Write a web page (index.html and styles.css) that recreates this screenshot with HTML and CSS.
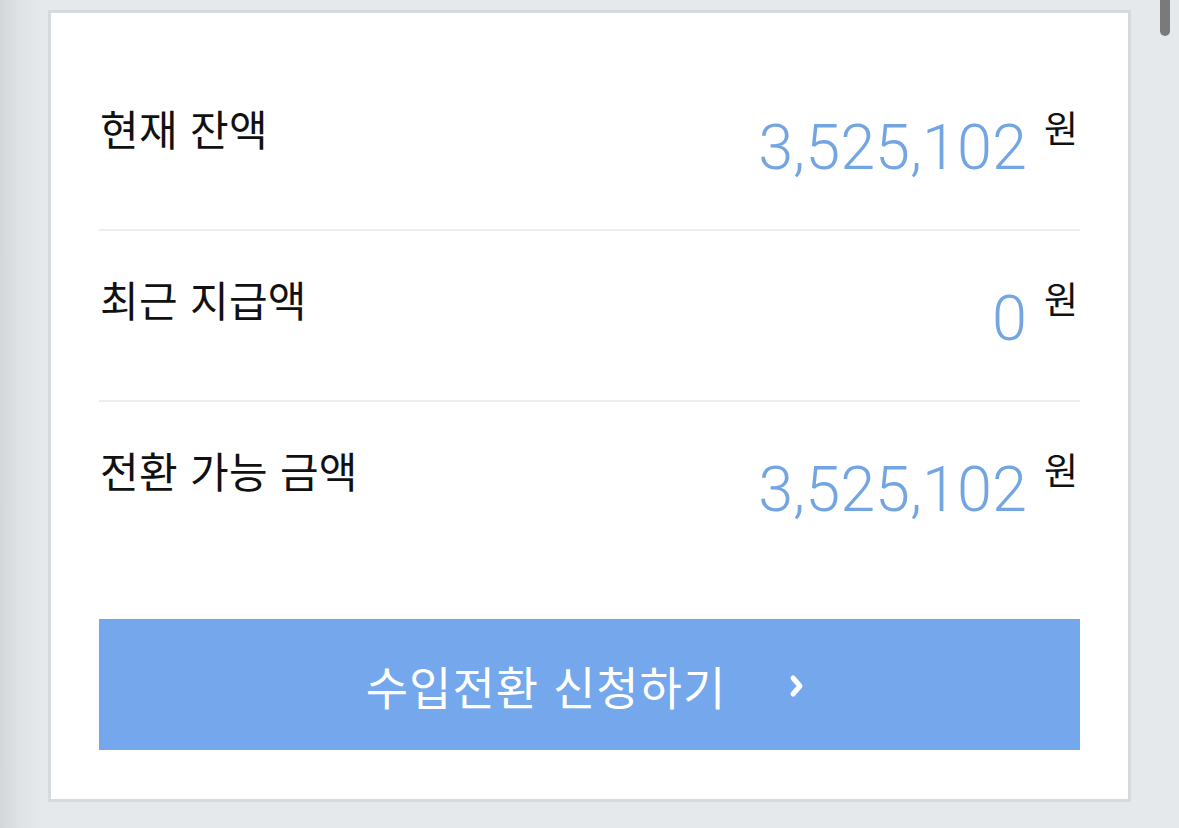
FILE: index.html
```html
<!DOCTYPE html>
<html lang="ko">
<head>
<meta charset="utf-8">
<title>잔액</title>
<link rel="stylesheet" href="styles.css">
</head>
<body>
<div class="page">
  <section class="card">
    <div class="row">
      <span class="label">현재 잔액</span>
      <span class="value"><span class="num">3,525,102</span><span class="unit">원</span></span>
    </div>
    <div class="row">
      <span class="label">최근 지급액</span>
      <span class="value"><span class="num">0</span><span class="unit">원</span></span>
    </div>
    <div class="row last">
      <span class="label">전환 가능 금액</span>
      <span class="value"><span class="num">3,525,102</span><span class="unit">원</span></span>
    </div>
    <button class="cta" type="button">
      <span class="cta-text">수입전환 신청하기</span>
      <svg class="chev" width="16" height="24" viewBox="0 0 16 24"><polyline points="4,4 11,12 4,20" fill="none" stroke="#fff" stroke-width="5" stroke-linecap="round" stroke-linejoin="round"/></svg>
    </button>
  </section>
</div>
<div class="scroll-thumb"></div>
</body>
</html>
```
FILE: styles.css
```css
html, body {
  margin: 0;
  padding: 0;
  height: 100%;
}
body {
  background: linear-gradient(to right, #d3d6d9 0px, #dfe2e5 18px, #e6e9ec 42px, #e6e9ec 100%);
  font-family: "Noto Sans CJK KR", "Noto Sans", sans-serif;
  overflow: hidden;
}
.page {
  padding: 10px 0 0 48px;
}
.card {
  box-sizing: border-box;
  width: 1083px;
  height: 792px;
  background: #ffffff;
  border: 3px solid #d7dadd;
  padding: 47px 48px 49px 48px;
  display: flex;
  flex-direction: column;
}
.row {
  box-sizing: border-box;
  height: 171px;
  border-bottom: 2px solid #ebedef;
  display: flex;
  justify-content: space-between;
  align-items: flex-start;
  padding-top: 43px;
}
.row.last {
  border-bottom: none;
}
.label {
  font-size: 42px;
  line-height: 50px;
  color: #111111;
  letter-spacing: 0.3px;
  padding-left: 1px;
}
.value {
  display: flex;
  align-items: flex-start;
}
.num {
  font-family: "Roboto", "Liberation Sans", sans-serif;
  font-weight: 300;
  font-size: 63px;
  line-height: 64px;
  color: #72a5e2;
  margin-top: 13px;
}
.unit {
  font-size: 37px;
  line-height: 44px;
  color: #111111;
  margin-left: 17px;
  margin-right: 2px;
  margin-top: 2px;
}
.cta {
  margin-top: 46px;
  height: 131px;
  width: 100%;
  border: none;
  background: #74a7eb;
  display: flex;
  align-items: center;
  justify-content: center;
  gap: 63px;
  padding: 0 8px 0 0;
  font-family: "Noto Sans CJK KR", "Noto Sans", sans-serif;
  cursor: pointer;
}
.cta-text {
  color: #ffffff;
  font-size: 46px;
  line-height: 54px;
  letter-spacing: 1px;
}
.chev {
  display: block;
  margin-top: 2px;
}
.scroll-thumb {
  position: absolute;
  top: -10px;
  left: 1160px;
  width: 10px;
  height: 46px;
  border-radius: 5px;
  background: #7a7a7a;
}
```
